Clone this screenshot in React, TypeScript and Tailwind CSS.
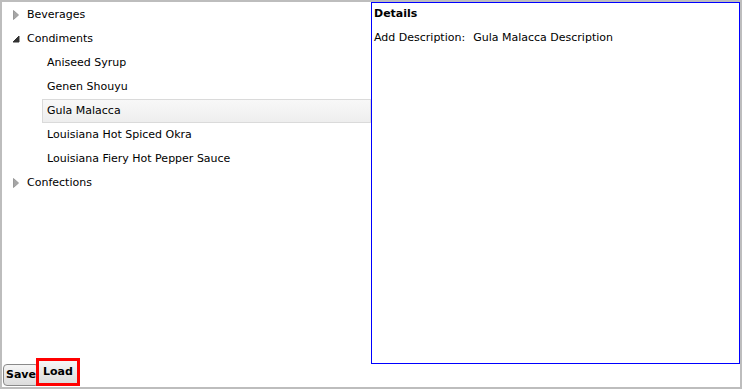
const Collapsed = () => (
  <svg width="16" height="16" viewBox="0 0 16 16" className="shrink-0">
    <path d="M5.5 3.5 L10.5 8 L5.5 12.5 Z" fill="#a6a6a6" stroke="#9a9a9a" strokeWidth="1" />
  </svg>
)

const Expanded = () => (
  <svg width="16" height="16" viewBox="0 0 16 16" className="shrink-0">
    <path d="M11 5 L11 11 L5 11 Z" fill="#333333" stroke="#333333" strokeWidth="1" />
  </svg>
)

const TopRow = ({ label, open }: { label: string; open?: boolean }) => (
  <div className="flex h-6 items-center pl-1.5">
    {open ? <Expanded /> : <Collapsed />}
    <span className="ml-[3px]">{label}</span>
  </div>
)

const ChildRow = ({ label, selected }: { label: string; selected?: boolean }) => (
  <div
    className={
      selected
        ? 'ml-10 flex h-6 items-center border border-[#dadada] bg-gradient-to-b from-[#f8f8f8] to-[#eeeeee] pl-1'
        : 'ml-10 flex h-6 items-center pl-[5px]'
    }
  >
    {label}
  </div>
)

const App = () => (
  <div
    className="flex h-[389px] w-[742px] flex-col border-2 border-[#bdbdbd] bg-white text-[11px] text-black"
    style={{ fontFamily: '"DejaVu Sans", Verdana, sans-serif' }}
  >
    <div className="flex h-[362px] shrink-0">
      <div className="w-[369px] pt-px">
        <TopRow label="Beverages" />
        <TopRow label="Condiments" open />
        <ChildRow label="Aniseed Syrup" />
        <ChildRow label="Genen Shouyu" />
        <ChildRow label="Gula Malacca" selected />
        <ChildRow label="Louisiana Hot Spiced Okra" />
        <ChildRow label="Louisiana Fiery Hot Pepper Sauce" />
        <TopRow label="Confections" />
      </div>
      <div className="flex-1 border border-[#0000ff] px-0.5 pt-px">
        <div className="font-bold leading-5">Details</div>
        <div className="mt-1 flex leading-5">
          <span>Add Description:</span>
          <span className="ml-2">Gula Malacca Description</span>
        </div>
      </div>
    </div>
    <div className="flex h-[23px] shrink-0 items-end pb-px pl-px">
      <button className="h-[22px] shrink-0 rounded-sm border border-[#8a8a8a] bg-gradient-to-b from-[#f6f6f6] to-[#dcdcdc] px-0.5 font-bold">
        Save
      </button>
      <button className="-ml-[3px] h-[28px] shrink-0 border-[3px] border-[#ff0000] bg-gradient-to-b from-[#f6f6f6] to-[#dcdcdc] px-1 font-bold">
        Load
      </button>
    </div>
  </div>
)

export default App
